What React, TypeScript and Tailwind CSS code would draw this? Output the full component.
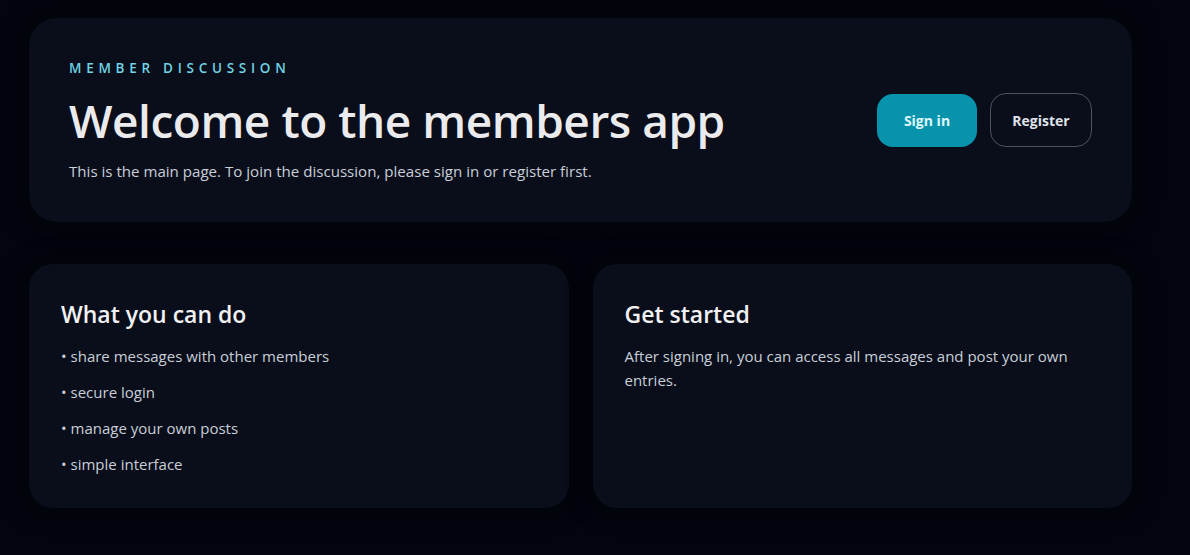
const features = [
  'share messages with other members',
  'secure login',
  'manage your own posts',
  'simple interface',
];

export default function App() {
  return (
    <div
      className="min-h-screen w-full bg-[#03050e] text-gray-100"
      style={{ fontFamily: '"Open Sans", "Noto Sans", sans-serif' }}
    >
      <div className="ml-[29px] w-[1103px] pt-[18px] pb-12">
        <header className="flex h-[204px] items-center justify-between rounded-[28px] bg-[#0a0e1b] pl-10 pr-[40px] shadow-[0_0_24px_rgba(0,0,0,0.5)]">
          <div>
            <p className="text-[13.5px] font-semibold uppercase tracking-[0.35em] text-[#6fd3e3]">
              Member Discussion
            </p>
            <h1 className="mt-[12px] text-[46px] font-semibold leading-[60px] tracking-[-0.01em] text-[#ebebee]">
              Welcome to the members app
            </h1>
            <p className="mt-[10px] text-[15.1px] text-[#c9ced8]">
              This is the main page. To join the discussion, please sign in or register first.
            </p>
          </div>
          <div className="flex items-center gap-[13px]">
            <button className="h-[53px] w-[100px] rounded-[16px] bg-[#0893ad] text-[14px] font-bold text-[#dff6fa]">
              Sign in
            </button>
            <button className="h-[54px] w-[102px] rounded-[16px] border border-[#4b5263] text-[14px] font-bold text-[#dfe2ea]">
              Register
            </button>
          </div>
        </header>

        <div className="mt-[42px] grid grid-cols-2 gap-6">
          <section className="rounded-[24px] bg-[#0a0e1b] px-8 pt-[34px] pb-[26px] shadow-[0_0_24px_rgba(0,0,0,0.5)]">
            <h2 className="text-[23px] font-semibold leading-[32px] text-[#f1f1f3]">What you can do</h2>
            <ul className="mt-[8px] flex flex-col text-[15px] text-[#c9ced8]">
              {features.map((f) => (
                <li key={f} className="leading-[36px]">
                  • {f}
                </li>
              ))}
            </ul>
          </section>
          <section className="rounded-[24px] bg-[#0a0e1b] px-8 pt-[34px] pb-[26px] shadow-[0_0_24px_rgba(0,0,0,0.5)]">
            <h2 className="text-[23px] font-semibold leading-[32px] text-[#f1f1f3]">Get started</h2>
            <p className="mt-[14px] max-w-[460px] text-[15px] leading-[24px] text-[#c9ced8]">
              After signing in, you can access all messages and post your own entries.
            </p>
          </section>
        </div>
      </div>
    </div>
  );
}
